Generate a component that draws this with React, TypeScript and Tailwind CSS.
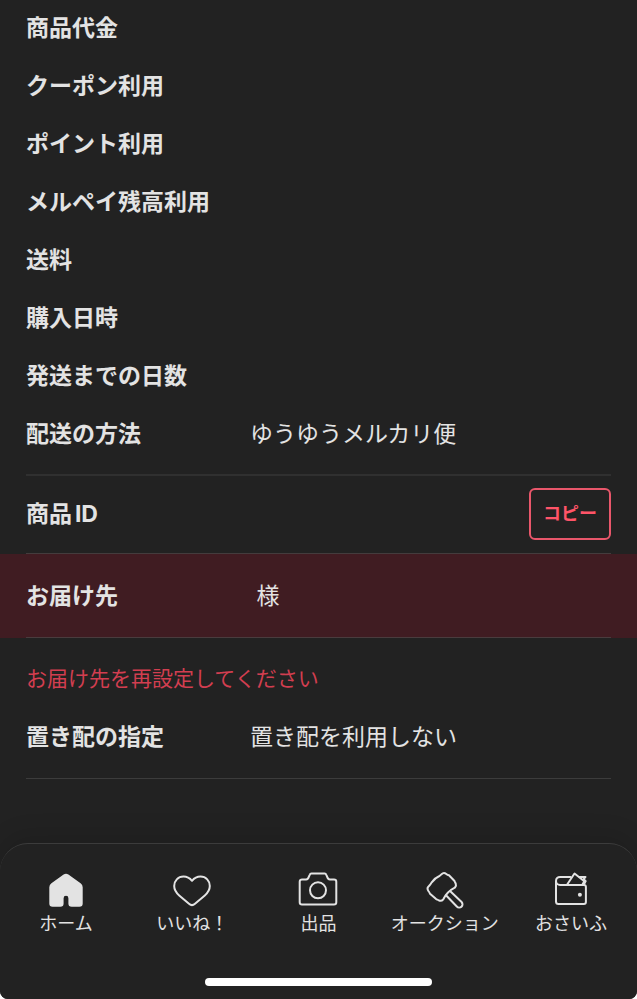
import type { ReactNode } from "react";

type Row = { label: string; value?: string };

const summary: Row[] = [
  { label: "商品代金" },
  { label: "クーポン利用" },
  { label: "ポイント利用" },
  { label: "メルペイ残高利用" },
  { label: "送料" },
  { label: "購入日時" },
  { label: "発送までの日数" },
  { label: "配送の方法", value: "ゆうゆうメルカリ便" },
];

const DetailRow = ({ label, value }: Row) => (
  <div className="flex flex-row items-center text-[23px] leading-[34px]">
    <dt className="w-56 shrink-0 font-bold [text-autospace:normal]">{label}</dt>
    <dd className="flex-1">{value}</dd>
  </div>
);

const Icon = ({ children }: { children: ReactNode }) => (
  <svg
    viewBox="0 0 40 40"
    className="h-10 w-10"
    fill="none"
    stroke="currentColor"
    strokeWidth="2"
    strokeLinecap="round"
    strokeLinejoin="round"
    aria-hidden="true"
  >
    {children}
  </svg>
);

const HomeIcon = () => (
  <Icon>
    <path
      fill="currentColor"
      stroke="none"
      d="M17.600 4.600a4 4 0 0 1 4.800 0l12.200 8.600a5 5 0 0 1 2.100 4v16.300a3.300 3.300 0 0 1-3.300 3.300H25.700a3.300 3.300 0 0 1-3.300-3.300v-5.300a2.400 2.400 0 0 0-4.800 0v5.300a3.300 3.300 0 0 1-3.300 3.300H6.600a3.300 3.300 0 0 1-3.300-3.300V17.200a5 5 0 0 1 2.100-4Z"
    />
  </Icon>
);

const HeartIcon = () => (
  <Icon>
    <path d="M20 10.800C17.500 7.800 14.500 6.600 11.500 6.600 6 6.600 2.200 10.800 2.200 16c0 4 2 6.800 5 9.400l9.800 8.400a4.600 4.600 0 0 0 6 0l9.800-8.400c3-2.600 5-5.400 5-9.400 0-5.200-3.800-9.400-9.300-9.400-3 0-6 1.200-8.500 4.200Z" />
  </Icon>
);

const CameraIcon = () => (
  <Icon>
    <path d="M4 9.400h4.200c1 0 1.700-.5 2.100-1.400l1.400-3.200c.3-.8.8-1.200 1.700-1.200h13.200c.9 0 1.400.4 1.700 1.200L29.700 8c.4.9 1.100 1.400 2.100 1.400H36a2.300 2.300 0 0 1 2.300 2.300v20.500a2.300 2.300 0 0 1-2.300 2.300H4a2.300 2.300 0 0 1-2.300-2.300V11.700A2.300 2.300 0 0 1 4 9.400Z" />
    <circle cx="20" cy="20.300" r="8" />
  </Icon>
);

const HammerIcon = () => (
  <Icon>
    <path d="M16.500 4.200a3.600 3.600 0 0 1 4.800-.2 6.500 6.500 0 0 0 2.700 1.300l5.500 5.700c.3 1 .9 1.800 1.200 2.500.7 1.600.2 3-.9 4.200-4.300 2.200-9.300 7-11.500 11.600-1.200 1.400-3 1.800-4.500 1-.9-.5-1.900-.8-2.700-1.200L5 23.700c-.3-1-.9-1.800-1.600-2.700-.9-1.400-1.400-2.600-.4-3.900 1.600-2 2.500-2.400 3.500-4.500C8.800 9.600 11.500 7.300 14 6.300c1-.5 1.600-1.300 2.500-2.100Z" />
    <path d="m21 25.300 10.800 11.200a3.200 3.200 0 0 0 4.800-4.500L25.300 21.300" />
  </Icon>
);

const WalletIcon = () => (
  <Icon>
    {/* body and folded flap */}
    <path d="M19.500 6.900H9a4 4 0 0 0 0 8h24a1.900 1.900 0 0 1 1.900 1.900v15.300a2 2 0 0 1-2 2H7.500A2.500 2.500 0 0 1 5 31.600V10.900" />
    {/* card sticking out */}
    <path d="m16 14.700 7.500-11.200 9.800 7.800-1.800 3.200" />
    <path d="M28.500 6.900h6l-1.800 2.200 2 2-1.700 3.300" />
    <circle cx="28.900" cy="24.700" r="2" fill="currentColor" stroke="none" />
  </Icon>
);

const tabs = [
  { label: "ホーム", icon: <HomeIcon /> },
  { label: "いいね！", icon: <HeartIcon /> },
  { label: "出品", icon: <CameraIcon /> },
  { label: "オークション", icon: <HammerIcon /> },
  { label: "おさいふ", icon: <WalletIcon /> },
];

export default function App() {
  return (
    <div className="bg-white">
      <div className="flex min-h-dvh flex-col overflow-hidden rounded-b-lg bg-[#222222] font-['Inter','Noto_Sans_CJK_JP',sans-serif] text-[#e3e3e3]">
        <main className="flex-1">
          {/* Order summary */}
          <dl className="mx-[26px] flex flex-col gap-6 border-b-2 border-[#303030] pt-[11px] pb-[23px]">
            {summary.map((row) => (
              <DetailRow key={row.label} {...row} />
            ))}
          </dl>

          {/* Item ID */}
          <div className="mx-[26px] flex flex-row items-center border-b border-[#443c3d] pt-3 pb-[13px]">
            <dl className="flex-1">
              <DetailRow label="商品ID" />
            </dl>
            <button
              type="button"
              className="rounded-md border-2 border-[#e9576b] px-3 py-3 text-lg leading-6 font-bold text-[#ff5468]"
            >
              コピー
            </button>
          </div>

          {/* Address */}
          <div className="bg-[#401c22] px-[26px]">
            <dl className="border-b border-[#4a3c3e] pt-[25px] pb-6">
              <DetailRow label="お届け先" value={"\u00a0様"} />
            </dl>
          </div>

          <div className="mx-[26px] flex flex-col gap-6 border-b border-[#3c3c3c] py-6">
            <p className="text-[21px] leading-[34px] text-[#d23e50]">
              お届け先を再設定してください
            </p>
            <dl>
              <DetailRow label="置き配の指定" value="置き配を利用しない" />
            </dl>
          </div>
        </main>

        {/* Tab bar */}
        <footer className="rounded-t-[28px] border-t border-[#3c3c3c] bg-[#222222] pt-[26px] pb-[13px] shadow-[0_-8px_24px_rgba(0,0,0,0.12)]">
          <nav className="grid grid-cols-5 px-[3px]">
            {tabs.map((tab) => (
              <a
                key={tab.label}
                href="#"
                className="flex flex-col items-center text-lg leading-7 whitespace-nowrap"
              >
                {tab.icon}
                {tab.label}
              </a>
            ))}
          </nav>
          <div className="mx-auto mt-10 h-2 w-[227px] rounded-full bg-white" />
        </footer>
      </div>
    </div>
  );
}
